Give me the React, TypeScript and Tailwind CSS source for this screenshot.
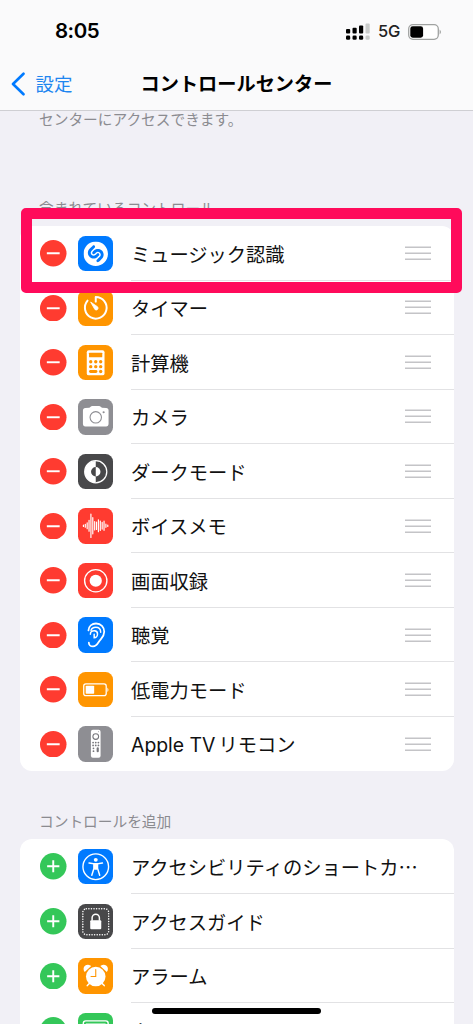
import type { ReactNode } from "react";
import { SiShazam } from "react-icons/si";

interface Control {
  label: string;
  latin?: string;
  color: string;
  icon: ReactNode;
}

const included: Control[] = [
  {
    label: "ミュージック認識",
    color: "bg-[#007aff]",
    icon: <SiShazam x={5.6} y={5.6} size={24.8} color="#fff" />,
  },
  {
    label: "タイマー",
    color: "bg-[#ff9500]",
    icon: (
      <>
        <path d="M18 11.8 V7 A11 11 0 1 1 9.7 10.8" fill="none" stroke="#fff" strokeWidth="2" strokeLinecap="round" strokeLinejoin="round" />
        <path d="M12.8 12.2 L19.8 17 A1.9 1.9 0 0 1 17.1 19.7 Z" fill="#fff" stroke="#fff" strokeWidth="0.8" strokeLinejoin="round" />
      </>
    ),
  },
  {
    label: "計算機",
    color: "bg-[#ff9500]",
    icon: (
      <>
        <rect x="8.9" y="5.4" width="18" height="25.4" rx="2" fill="#fff" />
        <g fill="#ff9500">
          <rect x="11.2" y="7.8" width="13.4" height="4.6" rx="0.6" />
          <circle cx="12.9" cy="17" r="1.7" />
          <circle cx="18" cy="17" r="1.7" />
          <circle cx="23" cy="17" r="1.7" />
          <circle cx="12.9" cy="22" r="1.7" />
          <circle cx="18" cy="22" r="1.7" />
          <circle cx="23" cy="22" r="1.7" />
          <rect x="11.2" y="25.3" width="8.5" height="3.1" rx="1.5" />
          <circle cx="23" cy="26.9" r="1.7" />
        </g>
      </>
    ),
  },
  {
    label: "カメラ",
    color: "bg-[#8e8e93]",
    icon: (
      <>
        <path d="M5 11.7 C5 10.2 6 9.4 7.3 9.2 L11.5 8.8 C12.7 8.6 12.8 7.2 14.5 7.2 H21.3 C23 7.2 23.1 8.6 24.4 8.8 L28.6 9.2 C30.2 9.4 31 10.2 31 11.7 V25.2 C31 26.9 30.2 27.8 28.5 27.8 H7.5 C5.8 27.8 5 26.9 5 25.2 Z" fill="#fff" />
        <circle cx="18" cy="18.6" r="5.8" fill="none" stroke="#8e8e93" strokeWidth="1.1" />
        <circle cx="26" cy="13.4" r="1.1" fill="#8e8e93" />
      </>
    ),
  },
  {
    label: "ダークモード",
    color: "bg-[#48484a]",
    icon: (
      <>
        <circle cx="18" cy="18" r="11.2" fill="none" stroke="#fff" strokeWidth="1.3" />
        <path d="M18 7 A11 11 0 0 0 18 29 V22.8 A4.8 4.8 0 0 1 18 13.2 Z" fill="#fff" />
        <path d="M18 13.2 A4.8 4.8 0 0 1 18 22.8 Z" fill="#fff" />
      </>
    ),
  },
  {
    label: "ボイスメモ",
    color: "bg-[#ff3b30]",
    icon: (
      <path
        d="M5.5 17.3V18.7 M7.4 16.5V19.5 M9.3 15V21 M11.2 12.4V23.6 M13.1 6.2V29.8 M15 9.8V26.2 M16.9 13.7V22.3 M18.8 14.2V21.8 M20.7 12V24 M22.6 13.2V22.8 M24.5 14.6V21.4 M26.4 13.4V22.6 M28.3 16.4V19.6 M30.2 17.3V18.7"
        stroke="#fff"
        strokeWidth="1.2"
        strokeLinecap="round"
      />
    ),
  },
  {
    label: "画面収録",
    color: "bg-[#ff3b30]",
    icon: (
      <>
        <circle cx="18" cy="18" r="11.3" fill="none" stroke="#fff" strokeWidth="1.4" />
        <circle cx="18" cy="18" r="6.2" fill="#fff" />
      </>
    ),
  },
  {
    label: "聴覚",
    color: "bg-[#007aff]",
    icon: (
      <g fill="none" stroke="#fff" strokeWidth="1.8" strokeLinecap="round">
        <path d="M10.6 13.6 C10.8 9.2 14.2 6.6 18.3 6.6 C23.2 6.6 26.6 10 26.6 15 C26.6 20.2 23.2 21.8 21 25.4 C19.5 27.9 18 29.8 15.2 29.8 C12.6 29.8 11 28 11 26" />
        <path d="M13.2 13.6 C13.8 11.4 15.6 10.4 18 10.4 C21.2 10.4 23 12.6 23 15.4" strokeWidth="1.5" />
        <path d="M12.6 17.4 C12.4 14.8 14.6 13.8 16.6 13.9 C18.6 14 19.8 15.4 19.8 17.2 C19.8 19.4 18.2 21 16.4 21 V17.6" strokeWidth="1.5" />
      </g>
    ),
  },
  {
    label: "低電力モード",
    color: "bg-[#ff9500]",
    icon: (
      <>
        <rect x="5.8" y="12" width="22.8" height="12" rx="2.2" fill="none" stroke="#fff" strokeWidth="1.3" />
        <rect x="7.8" y="14" width="8.6" height="8" rx="0.8" fill="#fff" />
        <path d="M29.8 15.6 Q32 18 29.8 20.4 Z" fill="#fff" />
      </>
    ),
  },
  {
    latin: "Apple TV",
    label: "リモコン",
    color: "bg-[#8e8e93]",
    icon: (
      <>
        <rect x="13.1" y="3.9" width="9.8" height="28.2" rx="2" fill="#fff" />
        <circle cx="18" cy="10.7" r="2.9" fill="none" stroke="#77777c" strokeWidth="1.1" />
        <circle cx="20.9" cy="5.8" r="0.5" fill="#77777c" />
        <g fill="#77777c">
          <circle cx="15.3" cy="16.8" r="0.9" />
          <circle cx="18" cy="16.8" r="0.9" />
          <circle cx="20.7" cy="16.8" r="0.9" />
          <circle cx="15.3" cy="19.7" r="0.9" />
          <circle cx="18" cy="19.7" r="0.9" />
          <circle cx="20.7" cy="19.7" r="0.9" />
          <circle cx="15.7" cy="22.6" r="0.9" />
          <circle cx="15.7" cy="25.5" r="0.9" />
          <rect x="18.9" y="21.6" width="2.2" height="5" rx="1.1" />
        </g>
      </>
    ),
  },
];

const more: Control[] = [
  {
    label: "アクセシビリティのショートカ…",
    color: "bg-[#007aff]",
    icon: (
      <>
        <circle cx="18" cy="18" r="13" fill="none" stroke="#fff" strokeWidth="1.4" />
        <circle cx="18" cy="11" r="2" fill="#fff" />
        <path d="M11.2 14.3 L16.3 15 V19.2 L14 26.6 M24.8 14.3 L19.7 15 V19.2 L22 26.6" fill="none" stroke="#fff" strokeWidth="1.5" strokeLinecap="round" />
        <path d="M15.6 14.3 H20.4 V19 L19.3 21 H16.7 L15.6 19 Z" fill="#fff" />
      </>
    ),
  },
  {
    label: "アクセスガイド",
    color: "bg-[#48484a]",
    icon: (
      <>
        <rect x="4.9" y="4.9" width="26.2" height="26.2" rx="3.5" fill="none" stroke="#fff" strokeWidth="1.5" strokeLinecap="round" strokeDasharray="0.1 2.5" />
        <rect x="12.4" y="16.4" width="11.2" height="9.2" rx="1.1" fill="#fff" />
        <path d="M14.3 17 V14 A3.7 3.7 0 0 1 21.7 14 V17" fill="none" stroke="#fff" strokeWidth="1.5" />
      </>
    ),
  },
  {
    label: "アラーム",
    color: "bg-[#ff9500]",
    icon: (
      <>
        <circle cx="18" cy="18.8" r="9.9" fill="#fff" />
        <path d="M6.8 14.2 A4.3 4.3 0 0 1 13.4 8.2 Z M29.2 14.2 A4.3 4.3 0 0 0 22.6 8.2 Z" fill="#fff" />
        <path d="M11.3 26 L9.4 28 M24.7 26 L26.6 28" stroke="#fff" strokeWidth="1.5" strokeLinecap="round" />
        <path d="M18 11.6 V18.8 H13.2" fill="none" stroke="#ff9500" strokeWidth="1.1" strokeLinecap="round" />
      </>
    ),
  },
  {
    label: "ウォレット",
    color: "bg-[#34c759]",
    icon: (
      <>
        <rect x="5.4" y="8" width="25.2" height="20" rx="2.5" fill="none" stroke="#fff" strokeWidth="1.4" />
        <path d="M8 11.3 H28" stroke="#fff" strokeWidth="1.2" />
      </>
    ),
  },
];

interface RowProps {
  item: Control;
  add?: boolean;
  last?: boolean;
}

const ControlRow = ({ item, add, last }: RowProps) => {
  return (
    <div className="flex h-[54.56px] shrink-0 items-center pl-[20.5px]">
      <svg className="size-[26.5px] shrink-0" viewBox="0 0 26 26">
        <circle cx="13" cy="13" r="13" fill={add ? "#34c759" : "#ff3b30"} />
        <path d={add ? "M7 13H19M13 7V19" : "M6.7 13H19.3"} stroke="#fff" strokeWidth="1.9" />
      </svg>
      <div className={`ml-[11px] size-[35.5px] shrink-0 overflow-hidden rounded-[7.5px] ${item.color}`}>
        <svg className="size-full" viewBox="0 0 36 36">
          {item.icon}
        </svg>
      </div>
      <div className={`ml-[18px] flex h-full min-w-0 flex-1 items-center border-[#e2e2e4] ${last ? "" : "border-b"}`}>
        <span className="flex items-baseline whitespace-nowrap pt-[1.5px] font-['Noto_Sans_CJK_JP',sans-serif] text-[19.25px] leading-7 text-[#111]">
          {item.latin && <span className="mr-[3px] font-[Inter] text-[19.4px]">{item.latin}</span>}
          {item.label}
        </span>
        {!add && (
          <svg className="ml-auto mr-[22.5px] h-[14px] w-[26px]" viewBox="0 0 26 14">
            <path d="M0 1.25H26M0 7.25H26M0 13.25H26" stroke="#c4c4c7" strokeWidth="1.5" />
          </svg>
        )}
      </div>
    </div>
  );
};

const StatusBar = () => {
  return (
    <div className="flex h-[62px] items-center pl-[55px] pr-[31px] pt-px">
      <span className="font-[Inter] text-[20.5px] font-semibold tracking-[-0.5px] text-black">8:05</span>
      <svg className="ml-auto h-[18px] w-6" viewBox="0 0 24 18">
        <g fill="#000">
          <rect x="0" y="6" width="4.2" height="4.5" rx="1" />
          <rect x="6.5" y="4.7" width="4.2" height="5.8" rx="1" />
          <rect x="13" y="2.6" width="4.2" height="7.9" rx="1" />
          <rect x="0" y="12.6" width="4.2" height="4.2" rx="1.3" />
          <rect x="6.5" y="12.6" width="4.2" height="4.2" rx="1.3" />
          <rect x="13" y="12.6" width="4.2" height="4.2" rx="1.3" />
        </g>
        <g fill="#cacccb">
          <rect x="19.5" y="0.5" width="4.2" height="10" rx="1" />
          <rect x="19.5" y="12.6" width="4.2" height="4.2" rx="1.3" />
        </g>
      </svg>
      <span className="ml-2 font-[Inter] text-[16.5px] font-medium tracking-[-0.3px] text-[#222]">5G</span>
      <svg className="ml-2 h-4 w-[34px]" viewBox="0 0 34 16">
        <rect x="0.7" y="0.7" width="29.6" height="14.6" rx="4.2" fill="#fff" stroke="#a0a2a1" strokeWidth="1.3" />
        <rect x="2.3" y="2.3" width="12.8" height="11.4" rx="2.4" fill="#000" />
        <path d="M31.6 5.4 Q34.4 8 31.6 10.6 Z" fill="#a0a2a1" />
      </svg>
    </div>
  );
};

const App = () => {
  return (
    <div className="relative flex h-screen w-full flex-col overflow-hidden bg-[#f1f0f6] font-['Noto_Sans_CJK_JP',sans-serif]">
      <header className="h-[110.5px] shrink-0 border-b border-[#cfcfd3] bg-[#fafafb]">
        <StatusBar />
        <div className="grid h-[43px] grid-cols-[1fr_auto_1fr] items-center">
          <div className="flex items-center pl-[11px] text-[#1f86f0]">
            <svg className="h-6 w-[14px]" viewBox="0 0 14 24">
              <path d="M12.5 1.7 L2 12 L12.5 22.3" fill="none" stroke="#007aff" strokeWidth="2.6" strokeLinecap="round" strokeLinejoin="round" />
            </svg>
            <span className="ml-[10.5px] text-[18.5px]">設定</span>
          </div>
          <h1 className="whitespace-nowrap text-[19.2px] font-bold text-black">コントロールセンター</h1>
        </div>
      </header>

      <main className="flex flex-col px-[19.5px] text-[14.7px] text-[#8b8b90]">
        <p className="h-[83px] pl-[19.5px] leading-[16px]">センターにアクセスできます。</p>
        <h2 className="h-[32.5px] pl-[19.5px] pt-1 leading-[20px]">含まれているコントロール</h2>
        <section className="shrink-0 overflow-hidden rounded-[12px] bg-white">
          {included.map((item, i) => (
            <ControlRow key={item.label} item={item} last={i === included.length - 1} />
          ))}
        </section>
        <h2 className="h-[68px] shrink-0 pl-[19.5px] pt-[40px] leading-[20px]">コントロールを追加</h2>
        <section className="shrink-0 overflow-hidden rounded-t-[12px] bg-white">
          {more.map((item) => (
            <ControlRow key={item.label} item={item} add />
          ))}
        </section>
      </main>

      {/* highlight around the first control */}
      <div className="absolute left-[21px] top-[208px] h-[85px] w-[441px] rounded-[5px] border-[11px] border-[#ff0b5b]" />
      {/* home indicator */}
      <div className="absolute left-[152px] top-[1008px] h-[6px] w-[169px] rounded-full bg-black" />
    </div>
  );
};

export default App;
